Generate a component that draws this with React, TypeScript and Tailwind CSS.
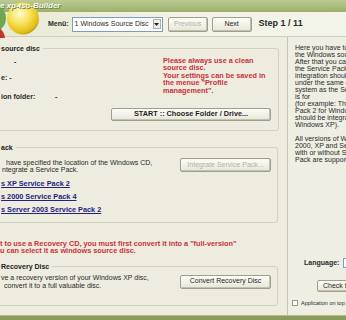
import type { ReactNode } from 'react';

function XpButton({
  children,
  className = '',
  disabled = false,
}: {
  children: ReactNode;
  className?: string;
  disabled?: boolean;
}) {
  return (
    <div
      className={`flex items-center justify-center rounded-[2px] border border-[#a09f8c] bg-linear-to-b from-[#fdfdf8] to-[#e8e6d8] shadow-[inset_-1px_-1px_0_#c4c1ae] whitespace-nowrap ${
        disabled ? 'text-[#b4b2a2]' : 'text-[#1e1e1e]'
      } ${className}`}
    >
      {children}
    </div>
  );
}

function Group({
  legend,
  className = '',
  children,
}: {
  legend: string;
  className?: string;
  children: ReactNode;
}) {
  return (
    <fieldset
      className={`-ml-[20px] pl-[20px] border border-[#d3d1c0] rounded-[3px] ${className}`}
    >
      <legend className="pr-[3px] font-bold leading-[9px] text-[7px] text-[#222]">
        {legend}
      </legend>
      {children}
    </fieldset>
  );
}

function Logo() {
  return (
    <svg className="absolute left-0 top-0 w-[44px] h-[38px]" viewBox="0 0 44 38">
      <defs>
        <radialGradient id="yel" cx="0.4" cy="0.35" r="0.7">
          <stop offset="0" stopColor="#fffbd0" />
          <stop offset="0.45" stopColor="#f7e35a" />
          <stop offset="0.85" stopColor="#e2bd14" />
          <stop offset="1" stopColor="#b89312" />
        </radialGradient>
      </defs>
      <circle cx="-9" cy="18" r="15" fill="#6fa653" />
      <circle cx="-8" cy="39" r="13" fill="#c0362c" />
      <circle cx="23" cy="18.5" r="16" fill="url(#yel)" />
    </svg>
  );
}

export default function App() {
  return (
    <div className="relative w-[346px] h-[320px] overflow-hidden flex flex-col bg-[#eeecdf] text-[7px] text-[#2a2a2a] font-['Liberation_Sans',Arial,sans-serif]">
      <div className="h-[12px] shrink-0 bg-linear-to-b from-[#bccb92] to-[#9db06a]" />
      <div className="h-[25px] shrink-0 flex items-center pl-[48px] border-b border-[#d2d0bd] bg-linear-to-r from-[#e7ead2] via-[#f2f3e6] to-[#f3f5ea]">
        <span className="font-bold text-[7px] mr-[3px]">Menü:</span>
        <div className="w-[91px] h-[15px] flex items-center justify-between border border-[#7f9db9] bg-white pl-[2px] pr-[1px]">
          <span className="text-[7px]">1 Windows Source Disc</span>
          <div className="w-[8px] h-[10px] flex items-center justify-center border border-[#b0b0a8] bg-[#eeeeea]">
            <svg className="w-[5px] h-[3px]" viewBox="0 0 5 3">
              <path d="M0 0h5L2.5 3z" fill="#222" />
            </svg>
          </div>
        </div>
        <XpButton disabled className="w-[40px] h-[15px] ml-[5px]">Previous</XpButton>
        <XpButton className="w-[40px] h-[15px] ml-[4px]">Next</XpButton>
        <span className="ml-[7px] font-bold text-[9px]">Step 1 / 11</span>
      </div>
      <Logo />
      <div className="absolute left-0 top-[1px] text-[8px] leading-[10px] font-bold italic text-[#f6f7ea] [text-shadow:1px_1px_0_#6f7f45]">
        e xp-iso-Builder
      </div>

      <div className="flex flex-1 min-h-0">
        <div className="w-[288px] shrink-0 border-r border-[#c7c5b3] pr-[9px] pt-[7px]">
          <Group legend="source disc" className="h-[87px] pr-[7px]">
            <div className="flex">
              <div className="w-[162px] pt-[5px] leading-[8px] font-bold">
                <div className="pl-[13px]">-</div>
                <div className="h-[8px]" />
                <div>e: -</div>
                <div className="mt-[11px] flex">
                  <span className="w-[54px]">ion folder:</span>
                  <span>-</span>
                </div>
              </div>
              <div className="pt-[4px] leading-[7.4px] text-[7.3px] font-bold text-[#c8323c] whitespace-nowrap">
                <div>Please always use a clean</div>
                <div>source disc.</div>
                <div>Your settings can be saved in</div>
                <div>the menue "Profile</div>
                <div>management".</div>
              </div>
            </div>
            <XpButton className="ml-[110px] mt-[7px] w-[160px] h-[13px] font-bold text-[7.3px]">
              START :: Choose Folder / Drive...
            </XpButton>
          </Group>

          <Group legend="ack" className="mt-[12px] h-[80px] pr-[6px]">
            <div className="flex justify-between">
              <div className="pt-[7px] leading-[7px]">
                <div className="pl-[5px]">have specified the location of the Windows CD,</div>
                <div className="pl-[1px]">ntegrate a Service Pack.</div>
                <div className="mt-[4px] leading-[13px] text-[7.3px] font-bold text-[#23237e] underline">
                  <div>s XP Service Pack 2</div>
                  <div>s 2000 Service Pack 4</div>
                  <div>s Server 2003 Service Pack 2</div>
                </div>
              </div>
              <XpButton disabled className="mt-[6px] w-[91px] h-[14px]">
                Integrate Service Pack...
              </XpButton>
            </div>
          </Group>

          <div className="mt-[17px] leading-[7.3px] text-[7.3px] font-bold text-[#c8323c] whitespace-nowrap">
            <div>t to use a Recovery CD, you must first convert it into a "full-version"</div>
            <div>u can select it as windows source disc.</div>
          </div>

          <Group legend="Recovery Disc" className="mt-[7px] h-[44px] pr-[6px]">
            <div className="flex justify-between">
              <div className="pt-[3px] leading-[8px]">
                <div>ve a recovery version of your Windows XP disc,</div>
                <div className="pl-[3px]">convert it to a full valuable disc.</div>
              </div>
              <XpButton className="mt-[4px] w-[91px] h-[14px]">Convert Recovery Disc</XpButton>
            </div>
          </Group>
        </div>

        <div className="flex-1 flex flex-col pl-[7px] pt-[7px] bg-[#efeee3] whitespace-nowrap">
          <div className="leading-[7px]">
            <div>Here you have to specify</div>
            <div>the Windows source disc.</div>
            <div>After that you can choose</div>
            <div>the Service Pack. The</div>
            <div>integration should be done</div>
            <div>under the same operating</div>
            <div>system as the Service Pack</div>
            <div>is for</div>
            <div>(for example: The Service</div>
            <div>Pack 2 for Windows XP</div>
            <div>should be integrated under</div>
            <div>Windows XP).</div>
            <div className="h-[7px]" />
            <div>All versions of Windows</div>
            <div>2000, XP and Server 2003</div>
            <div>with or without Service</div>
            <div>Pack are supported.</div>
          </div>
          <div className="mt-[95px] flex items-center h-[10px] pl-[9px]">
            <span className="font-bold w-[39px]">Language:</span>
            <div className="w-[60px] h-[10px] border border-[#7f9db9] bg-white" />
          </div>
          <XpButton className="mt-[12px] ml-[22px] w-[60px] h-[12px] justify-start pl-[5px]">
            Check for updates
          </XpButton>
          <div className="mt-[8px] -ml-[3px] flex items-center h-[6px]">
            <div className="w-[6px] h-[6px] border border-[#9a9a8a] bg-white mr-[3px]" />
            <span className="text-[5.5px]">Application on top</span>
          </div>
        </div>
      </div>
      <div className="h-[5px] shrink-0 bg-[#8c9c5e] border-t border-[#b3c08c]" />
    </div>
  );
}
